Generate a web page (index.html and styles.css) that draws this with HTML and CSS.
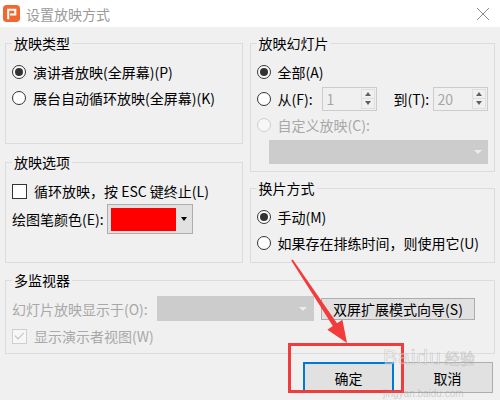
FILE: index.html
```html
<!DOCTYPE html>
<html lang="zh-CN">

<head>
    <meta charset="UTF-8">
    <meta name="viewport" content="width=device-width, initial-scale=1.0">
    <title>设置放映方式</title>
    <link rel="stylesheet" href="styles.css">
</head>

<body>
    <div class="window">
        <div class="titlebar">
            <svg class="app-icon" viewBox="0 0 18 18">
                <rect x="0" y="0" width="18" height="18" rx="4" fill="#f26630" />
                <path d="M5.5 15 V5 H13 V10 H7.5" fill="none" stroke="#fff" stroke-width="2.2" />
            </svg>
            <span class="title">设置放映方式</span>
            <svg class="close" viewBox="0 0 12 12">
                <path d="M0 0 L12 12 M12 0 L0 12" stroke="#8c8c8c" stroke-width="1" />
            </svg>
        </div>

        <div class="content">
            <div class="columns">
                <div class="col col-left">
                    <div class="group g-type">
                        <div class="legend">放映类型</div>
                        <div class="opt"><span class="radio checked"></span>演讲者放映(全屏幕)(P)</div>
                        <div class="opt"><span class="radio"></span>展台自动循环放映(全屏幕)(K)</div>
                    </div>
                    <div class="group g-options">
                        <div class="legend">放映选项</div>
                        <div class="opt"><span class="check"></span>循环放映，按 ESC 键终止(L)</div>
                        <div class="opt pen">
                            <span class="pen-label">绘图笔颜色(E):</span>
                            <div class="color-btn">
                                <span class="swatch"></span>
                                <span class="caret"></span>
                            </div>
                        </div>
                    </div>
                </div>

                <div class="col col-right">
                    <div class="group g-slides">
                        <div class="legend">放映幻灯片</div>
                        <div class="opt"><span class="radio checked"></span>全部(A)</div>
                        <div class="opt range">
                            <span class="radio"></span>
                            <span class="from-label">从(F):</span>
                            <div class="spin">
                                <span class="spin-val">1</span>
                                <span class="spin-btns"><i class="up"></i><i class="down"></i></span>
                            </div>
                            <span class="to-label">到(T):</span>
                            <div class="spin">
                                <span class="spin-val">20</span>
                                <span class="spin-btns"><i class="up"></i><i class="down"></i></span>
                            </div>
                        </div>
                        <div class="opt disabled"><span class="radio"></span>自定义放映(C):</div>
                        <div class="select custom-select"><span class="caret light"></span></div>
                    </div>
                    <div class="group g-advance">
                        <div class="legend">换片方式</div>
                        <div class="opt"><span class="radio checked"></span>手动(M)</div>
                        <div class="opt"><span class="radio"></span>如果存在排练时间，则使用它(U)</div>
                    </div>
                </div>
            </div>

            <div class="group g-monitor">
                <div class="legend">多监视器</div>
                <div class="opt monitor-row">
                    <span class="monitor-label disabled">幻灯片放映显示于(O):</span>
                    <div class="select monitor-select"><span class="caret light"></span></div>
                    <div class="btn wizard">双屏扩展模式向导(S)</div>
                </div>
                <div class="opt disabled"><span class="check checked"></span>显示演示者视图(W)</div>
            </div>

            <div class="actions">
                <div class="btn dialog-btn primary">确定</div>
                <div class="btn dialog-btn">取消</div>
            </div>
        </div>

        <svg class="annotation" viewBox="0 0 500 400">
            <polygon points="292.8,259.4 337,323.3 342.4,319.7 347,343 327.4,329.7 332.8,326.1 291.2,260.6"
                fill="#f23c3c" />
            <rect x="289.5" y="344.5" width="113" height="47" fill="none" stroke="#f23c3c" stroke-width="3" />
        </svg>

        <div class="watermark">
            <div class="wm-row"><span class="wm-big">Baidu</span><span class="wm-cn">经验</span></div>
            <div class="wm-url">jingyan.baidu.com</div>
        </div>
    </div>
</body>

</html>
```

FILE: styles.css
```css
* {
    box-sizing: border-box;
    margin: 0;
    padding: 0;
}

body {
    width: 500px;
    height: 400px;
    overflow: hidden;
    background-color: #f0f0f0;
    font-family: "Noto Sans CJK SC", "Noto Sans", sans-serif;
    font-size: 14px;
    color: #000;
}

.window {
    position: relative;
    width: 500px;
    height: 400px;
}

/* title bar */
.titlebar {
    height: 27px;
    background-color: #fff;
    display: flex;
    align-items: center;
    padding-left: 3px;
}

.app-icon {
    width: 17px;
    height: 17px;
}

.title {
    margin-left: 6px;
    color: #9a9a9a;
    line-height: 20px;
}

.close {
    margin-left: auto;
    margin-right: 11px;
    width: 12px;
    height: 12px;
}

/* dialog body */
.content {
    padding: 0 5px;
}

.columns {
    display: flex;
    gap: 7px;
}

.col {
    display: flex;
    flex-direction: column;
}

.col-left {
    width: 238px;
}

.col-right {
    width: 246px;
}

.group {
    border: 1px solid #dcdcdc;
    padding: 0 6px;
    margin-top: 16px;
}

.legend {
    margin: -11px 0 6px 0;
    padding: 0 2px;
    width: fit-content;
    background-color: #f0f0f0;
    line-height: 20px;
}

.g-type {
    height: 101px;
}

.g-options {
    margin-top: 18px;
    height: 101px;
}

.g-slides {
    height: 129px;
}

.g-advance {
    height: 75px;
}

.g-monitor {
    margin-top: 17px;
    height: 74px;
}

.opt {
    display: flex;
    align-items: center;
    height: 26px;
    white-space: nowrap;
}

.disabled {
    color: #a8a8a8;
}

/* radio + checkbox */
.radio {
    width: 14px;
    height: 14px;
    border: 1px solid #333;
    border-radius: 50%;
    background-color: #fff;
    margin-right: 7px;
    display: flex;
    align-items: center;
    justify-content: center;
    flex-shrink: 0;
}

.radio.checked::after {
    content: "";
    width: 8px;
    height: 8px;
    border-radius: 50%;
    background-color: #333;
}

.disabled .radio {
    border-color: #cfcfcf;
    background-color: #f7f7f7;
}

.check {
    width: 15px;
    height: 15px;
    border: 1px solid #333;
    background-color: #fff;
    margin-right: 7px;
    flex-shrink: 0;
    display: flex;
    align-items: center;
    justify-content: center;
}

.disabled .check {
    border-color: #cfcfcf;
    background-color: #f7f7f7;
}

.check.checked::after {
    content: "";
    width: 8px;
    height: 4px;
    border-left: 1.5px solid #bdbdbd;
    border-bottom: 1.5px solid #bdbdbd;
    transform: translateY(-2px) rotate(-45deg);
}

/* pen colour */
.pen-label {
    width: 95px;
}

.pen {
    height: 30px;
}

.color-btn {
    width: 86px;
    height: 30px;
    border: 1px solid #adadad;
    background-color: #e1e1e1;
    display: flex;
    align-items: center;
    padding-left: 3px;
}

.swatch {
    width: 65px;
    height: 23px;
    background-color: #ff0000;
}

.caret {
    width: 0;
    height: 0;
    border-left: 3.5px solid transparent;
    border-right: 3.5px solid transparent;
    border-top: 4px solid #000;
    margin-left: 5px;
}

.caret.light {
    border-top-color: #ececec;
    border-left-width: 4px;
    border-right-width: 4px;
    margin-left: 0;
}

/* slide range */
.range {
    height: 27px;
}

.from-label {
    width: 44px;
}

.to-label {
    margin-left: 17px;
    width: 39px;
}

.spin {
    width: 55px;
    height: 24px;
    border: 1px solid #cccccc;
    background-color: #f0f0f0;
    display: flex;
}

.spin-val {
    flex: 1;
    padding-left: 4px;
    line-height: 22px;
    color: #a6a6a6;
}

.spin-btns {
    width: 14px;
    margin: 1px 1px 1px 0;
    border: 1px solid #dedede;
    display: flex;
    flex-direction: column;
}

.spin-btns i {
    flex: 1;
    display: flex;
    align-items: center;
    justify-content: center;
}

.spin-btns i::after {
    content: "";
    width: 0;
    height: 0;
    border-left: 3.5px solid transparent;
    border-right: 3.5px solid transparent;
}

.spin-btns .up {
    border-bottom: 1px solid #dedede;
}

.spin-btns .up::after {
    border-bottom: 4px solid #606060;
}

.spin-btns .down::after {
    border-top: 4px solid #606060;
}

/* disabled selects */
.select {
    background-color: #cccccc;
    display: flex;
    align-items: center;
    justify-content: flex-end;
}

.custom-select {
    margin: 2px 0 0 12px;
    height: 24px;
    padding-right: 6px;
}

.monitor-row {
    height: 25px;
}

.monitor-label {
    width: 145px;
}

.monitor-select {
    width: 157px;
    height: 25px;
    padding-right: 7px;
}

.btn {
    border: 1px solid #adadad;
    background-color: #e1e1e1;
    display: flex;
    align-items: center;
    justify-content: center;
}

.wizard {
    margin-left: 7px;
    width: 154px;
    height: 22px;
}

.g-monitor .opt.disabled {
    margin-top: 2px;
}

/* bottom buttons */
.actions {
    margin-top: 8px;
    padding-right: 2px;
    display: flex;
    justify-content: flex-end;
    gap: 8px;
}

.dialog-btn {
    width: 91px;
    height: 31px;
    line-height: 20px;
}

.dialog-btn.primary {
    border: 2px solid #0078d7;
}

/* overlays */
.annotation {
    position: absolute;
    left: 0;
    top: 0;
    width: 500px;
    height: 400px;
    pointer-events: none;
}

.watermark {
    position: absolute;
    left: 383px;
    top: 347px;
    pointer-events: none;
    color: rgba(255, 255, 255, 0.45);
    -webkit-text-stroke: 0.7px rgba(150, 150, 150, 0.45);
    font-family: "Liberation Sans", sans-serif;
}

.wm-row {
    height: 20px;
    line-height: 20px;
    display: flex;
    align-items: baseline;
}

.wm-big {
    font-size: 21px;
    letter-spacing: 1px;
}

.wm-cn {
    font-family: "Noto Sans CJK SC", sans-serif;
    font-size: 15px;
    margin-left: 3px;
}

.wm-url {
    margin-top: 22px;
    font-size: 10px;
    line-height: 10px;
    -webkit-text-stroke: 0;
    color: rgba(150, 150, 150, 0.4);
}
```
